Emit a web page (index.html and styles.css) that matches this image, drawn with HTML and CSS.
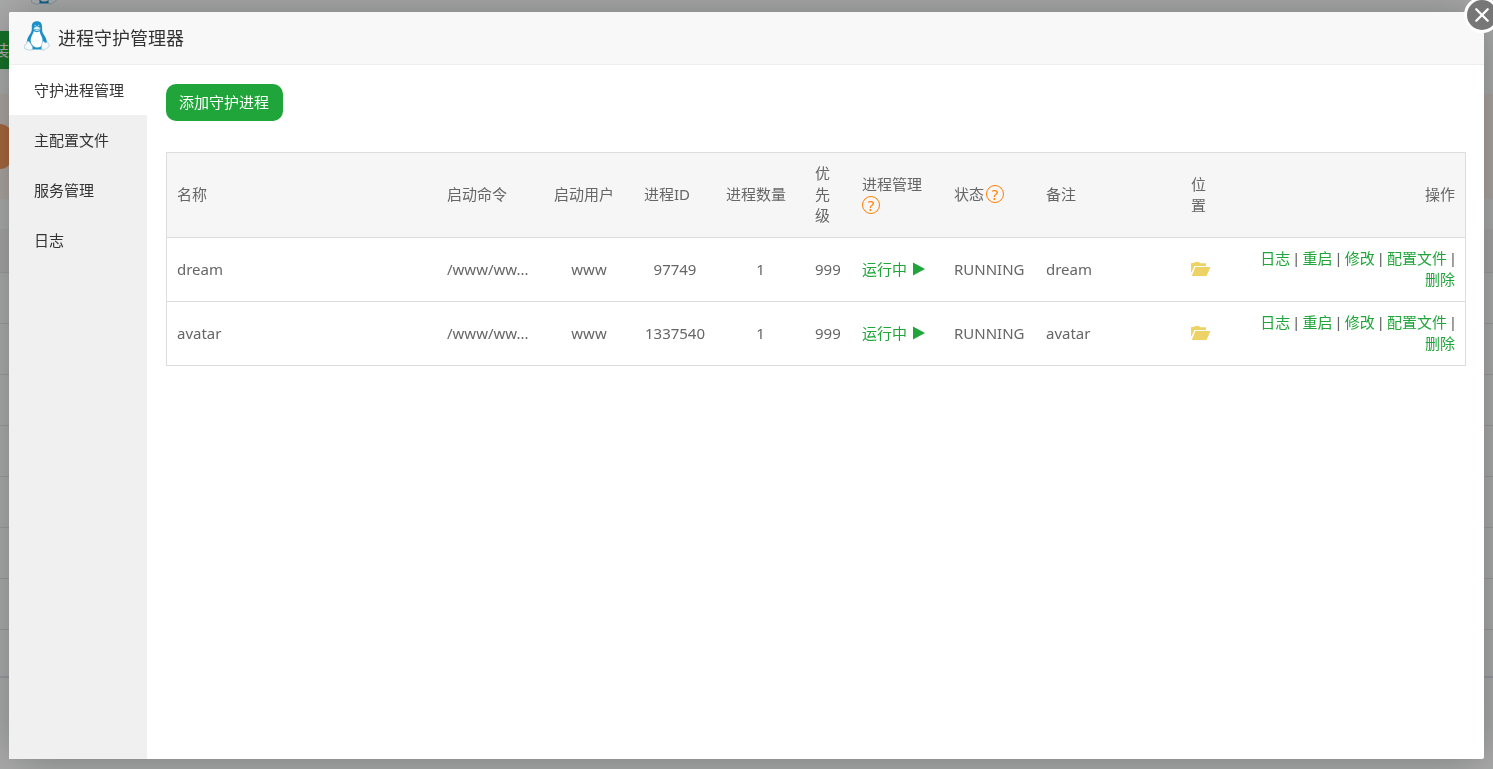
FILE: index.html
```html
<!DOCTYPE html>
<html lang="zh-CN">
<head>
  <meta charset="UTF-8" />
  <meta name="viewport" content="width=device-width, initial-scale=1.0"/>
  <title>进程守护管理器</title>
  <link rel="stylesheet" href="styles.css">
</head>
<body>

  <svg class="sprite" aria-hidden="true">
    <symbol id="tux" viewBox="0 0 26 30">
      <path d="M13 .3c-3.500 0-5.300 2.100-5.200 5.400.1 3.100 0 4.400-1.400 6.800-1.800 2.700-3.500 5.200-3.600 8.600L3 24l4.500 4.500h11.200l4.300-5-.1-2.400c-.4-3.500-1.700-5.600-3.300-7.800-1.500-2.100-1.500-3.800-1.500-6.600C18.100 2.300 16.500.3 13 .3z" fill="#1a8fc8"/>
      <path d="M9.800 10.200c-.6 2.300-2.300 4.400-2.900 7.200-.5 2.300-.3 4 .8 5.600 1.400 2.100 2.700 3.600 5.500 3.600 3 0 4.700-1.600 5.200-4.300.4-2.700.2-4.800-1-7.300-1-1.900-1.400-3-1.700-4.800l-2.800 1.100z" fill="#fff"/>
      <path d="M9.600 7l3.200-1.700 3.700 1.600-.6 2-2.800 1.400-2.900-1.300z" fill="#e3f1f8"/>
      <path d="M10 8l3 .9 3-1" fill="none" stroke="#4a9cc0" stroke-width=".7"/>
      <circle cx="11.200" cy="4.500" r=".8" fill="#9fd2ea"/>
      <circle cx="14.600" cy="4.500" r=".8" fill="#9fd2ea"/>
      <path d="M3.600 20c1.600.2 3 2.200 4.300 4.700 1.200 1.900.9 3.800-.9 4.500-1.800.4-4.100-1-6.200-1.500-.9-.6.1-1.900-.1-3.200 0-1.200 1.500-.9 2-1.600.4-.8.100-1.900.9-2.900z" fill="#f6fbfd" stroke="#93bccf" stroke-width=".6"/>
      <path d="M19.200 20c.9.100 1.100 1.700 2.300 1.700 1 0 1.200-.9 2-.8.9.2.6 1.700 1.100 2.500.4.700 1.100 1 .9 1.700-.7 1.300-3 2-4.300 3.300-1.300 1.200-3.600.9-3.700-1.200-.1-2.300.3-5.400 1.700-7.200z" fill="#f6fbfd" stroke="#93bccf" stroke-width=".6"/>
    </symbol>
    <symbol id="folder" viewBox="0 0 20 14">
      <path d="M0 11V1.500L1 1h2L4 0h4l1 1.200h6V4H3.500L0 11z" fill="#edd265"/>
      <path d="M4.300 5H19.500L15.500 14H.8z" fill="#edd265"/>
    </symbol>
    <symbol id="play" viewBox="0 0 12 14">
      <path d="M0 .5L12 7 0 13.500z" fill="currentColor"/>
    </symbol>
  </svg>

  <!-- panel page under the layer -->
  <div class="page" aria-hidden="true">
    <div class="page-logo"><svg><use href="#tux"/></svg></div>
    <div class="page-tab">装</div>
    <div class="page-notice"><span class="page-pill"></span></div>
    <div class="page-head"></div>
    <div class="page-row"></div>
    <div class="page-row"></div>
    <div class="page-row"></div>
    <div class="page-row"></div>
    <div class="page-row"></div>
    <div class="page-row"></div>
    <div class="page-row"></div>
    <div class="page-row last"></div>
  </div>

  <div class="shade">
    <div class="layer" role="dialog" aria-labelledby="layerTitle">
      <button class="close" aria-label="关闭">
        <svg viewBox="0 0 14 14"><path d="M2 2l10 10M12 2L2 12"/></svg>
      </button>

      <header class="title">
        <svg class="logo"><use href="#tux"/></svg>
        <h1 id="layerTitle">进程守护管理器</h1>
      </header>

      <div class="main">
        <nav class="menu">
          <a class="on" href="#process">守护进程管理</a>
          <a href="#config">主配置文件</a>
          <a href="#service">服务管理</a>
          <a href="#log">日志</a>
        </nav>

        <section class="content">
          <button class="btn-add">添加守护进程</button>

          <table>
            <colgroup>
              <col>
              <col class="w-cmd">
              <col class="w-user">
              <col class="w-pid">
              <col class="w-num">
              <col class="w-level">
              <col class="w-state">
              <col class="w-state">
              <col class="w-note">
              <col class="w-path">
              <col class="w-opt">
            </colgroup>
            <thead>
              <tr>
                <th>名称</th>
                <th>启动命令</th>
                <th>启动用户</th>
                <th>进程ID</th>
                <th>进程数量</th>
                <th>优先级</th>
                <th>进程管理 <a class="help" href="#help">?</a></th>
                <th class="status">状态<a class="help" href="#help">?</a></th>
                <th>备注</th>
                <th>位置</th>
                <th class="right">操作</th>
              </tr>
            </thead>
            <tbody>
              <tr>
                <td>dream</td>
                <td>/www/ww...</td>
                <td class="center">www</td>
                <td class="center">97749</td>
                <td class="center">1</td>
                <td>999</td>
                <td class="run"><a href="#stop">运行中 <svg class="play"><use href="#play"/></svg></a></td>
                <td>RUNNING</td>
                <td>dream</td>
                <td class="path"><a href="#path" aria-label="打开目录"><svg class="folder"><use href="#folder"/></svg></a></td>
                <td class="right opt"><a href="#log">日志</a> | <a href="#restart">重启</a> | <a href="#edit">修改</a> | <a href="#conf">配置文件</a> | <a href="#del">删除</a></td>
              </tr>
              <tr>
                <td>avatar</td>
                <td>/www/ww...</td>
                <td class="center">www</td>
                <td class="center">1337540</td>
                <td class="center">1</td>
                <td>999</td>
                <td class="run"><a href="#stop">运行中 <svg class="play"><use href="#play"/></svg></a></td>
                <td>RUNNING</td>
                <td>avatar</td>
                <td class="path"><a href="#path" aria-label="打开目录"><svg class="folder"><use href="#folder"/></svg></a></td>
                <td class="right opt"><a href="#log">日志</a> | <a href="#restart">重启</a> | <a href="#edit">修改</a> | <a href="#conf">配置文件</a> | <a href="#del">删除</a></td>
              </tr>
            </tbody>
          </table>
        </section>
      </div>
    </div>
  </div>

</body>
</html>
```
FILE: styles.css
```css
* {
  box-sizing: border-box;
}
body {
  margin: 0;
  height: 100vh;
  overflow: hidden;
  background: #f4f6f5;
  color: #666;
  font-family: "Noto Sans", "Noto Sans CJK SC", sans-serif;
  font-size: 15px;
  line-height: 21px;
}
a {
  color: #20a53a;
  text-decoration: none;
}
button {
  border: none;
  font-family: inherit;
  cursor: pointer;
}
.sprite {
  position: absolute;
  width: 0;
  height: 0;
}

/* Page under the layer */
.page {
  display: flex;
  flex-direction: column;
}
.page-logo {
  display: flex;
  align-items: flex-end;
  height: 5px;
  padding-left: 31px;
  margin-bottom: 26px;
}
.page-logo svg {
  width: 26px;
  height: 30px;
  flex-shrink: 0;
}
.page-tab {
  display: flex;
  justify-content: flex-end;
  width: 9px;
  height: 38px;
  line-height: 38px;
  margin-bottom: 25px;
  overflow: hidden;
  background: #20a53a;
  color: #fff;
}
.page-notice {
  display: flex;
  align-items: center;
  height: 105px;
  background: #f5ede6;
}
.page-pill {
  width: 12px;
  height: 45px;
  border-radius: 0 12px 12px 0;
  background: #f0965a;
}
.page-head {
  height: 44px;
  margin-top: 30px;
  background: #eee;
  border-bottom: 1px solid #e0e0e6;
}
.page-row {
  height: 51px;
  border-bottom: 1px solid #e0e0e6;
}
.page-row.last {
  height: 48px;
  border-bottom: 2px solid #dcdce8;
}

/* Layer */
.shade {
  position: fixed;
  inset: 0;
  display: flex;
  padding: 12px 9px 10px;
  background: rgba(0, 0, 0, 0.3);
}
.layer {
  position: relative;
  display: flex;
  flex-direction: column;
  flex: 1;
  min-width: 0;
  border-radius: 2px;
  background: #fff;
  box-shadow: 1px 1px 50px rgba(0, 0, 0, 0.3);
}
.close {
  position: absolute;
  top: -15px;
  right: -16px;
  display: flex;
  align-items: center;
  justify-content: center;
  width: 36px;
  height: 36px;
  padding: 0;
  border: 3px solid #fff;
  border-radius: 50%;
  background: #777;
}
.close svg {
  width: 16px;
  height: 16px;
  fill: none;
  stroke: #fff;
  stroke-width: 2;
  stroke-linecap: round;
}
.title {
  display: flex;
  align-items: center;
  gap: 8px;
  height: 53px;
  padding: 0 15px;
  border-bottom: 1px solid #eee;
  border-radius: 2px 2px 0 0;
  background: #f8f8f8;
}
.title h1 {
  margin: 0;
  color: #333;
  font-size: 18px;
  font-weight: normal;
}
.logo {
  width: 26px;
  height: 30px;
  margin-bottom: 4px;
}
.main {
  display: flex;
  flex: 1;
}
.menu {
  width: 138px;
  flex-shrink: 0;
  background: #f0f0f0;
}
.menu a {
  display: block;
  height: 50px;
  padding-left: 25px;
  line-height: 50px;
  color: #333;
}
.menu a.on {
  background: #fff;
}
.content {
  flex: 1;
  min-width: 0;
  padding: 19px 18px 19px 19px;
}
.btn-add {
  display: block;
  height: 37px;
  margin-bottom: 31px;
  padding: 0 14px 2px 13px;
  border-radius: 10px;
  background: #20a53a;
  color: #fff;
  font-size: 15px;
}

/* Process list */
table {
  width: 100%;
  table-layout: fixed;
  border: 1px solid #ddd;
  border-spacing: 0;
}
th, td {
  padding: 10px 10px 11px;
  font-weight: normal;
  text-align: left;
  vertical-align: middle;
}
th {
  background: #f6f6f6;
}
td {
  border-top: 1px solid #ddd;
}
.center {
  text-align: center;
}
.right {
  text-align: right;
}
.w-cmd { width: 107px; }
.w-user { width: 90px; }
.w-pid { width: 82px; }
.w-num { width: 89px; }
.w-level { width: 47px; }
.w-state { width: 92px; }
.w-note { width: 145px; }
.w-path { width: 39px; }
.w-opt { width: 245px; }

.help {
  display: inline-block;
  width: 18px;
  height: 18px;
  border: 1px solid #ff7f00;
  border-radius: 50%;
  color: #ff7f00;
  line-height: 16px;
  text-align: center;
}
.status .help {
  margin-left: 2px;
}
.run {
  white-space: nowrap;
}
.play {
  width: 12px;
  height: 14px;
  margin-left: 2px;
  vertical-align: -1px;
}
.path a {
  display: flex;
}
.folder {
  width: 20px;
  height: 14px;
  flex-shrink: 0;
}
/* narrower separators between the links */
.opt {
  font-family: "Liberation Sans", "Noto Sans CJK SC", sans-serif;
}
.opt a {
  white-space: nowrap;
}
```
